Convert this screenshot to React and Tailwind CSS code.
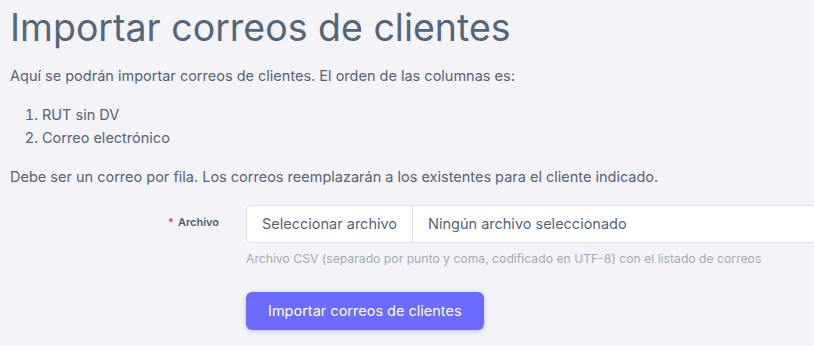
export default function App() {
  return (
    <div
      className="min-h-screen overflow-hidden bg-[#f3f3f8] px-[10px] text-[#556477]"
      style={{ fontFamily: "Inter, 'Noto Sans', sans-serif" }}
    >
      <h1 className="pt-[4px] text-[37.5px] leading-[48px] font-normal text-[#546679]">
        Importar correos de clientes
      </h1>

      <p className="mt-[12px] text-[14.5px] leading-[24px]">
        Aquí se podrán importar correos de clientes. El orden de las columnas es:
      </p>

      <ol className="mt-[15px] list-decimal pl-[32px] text-[14.5px] leading-[23px]">
        <li>RUT sin DV</li>
        <li>Correo electrónico</li>
      </ol>

      <p className="mt-[16px] text-[14.5px] leading-[24px]">
        Debe ser un correo por fila. Los correos reemplazarán a los existentes para el cliente indicado.
      </p>

      {/* file field */}
      <div className="mt-[16px] flex">
        <div className="flex w-[236px] shrink-0 justify-end pr-[27px] pt-[9px]">
          <label className="text-[11px] font-semibold text-[#4f5e70]">
            <span className="mr-[4px] text-[#ef4444]">*</span>
            Archivo
          </label>
        </div>
        <div className="flex-1">
          <div className="-mr-[40px] flex h-[38px] items-stretch rounded-[5px] border border-[#dcdfe5] bg-white text-[14.5px]">
            <div className="flex items-center border-r border-[#dcdfe5] px-[15px] text-[#556477]">
              Seleccionar archivo
            </div>
            <div className="flex items-center px-[15px] text-[#556477]">
              Ningún archivo seleccionado
            </div>
          </div>
          <p className="mt-[8px] text-[12.2px] leading-[16px] text-[#a3abb8]">
            Archivo CSV (separado por punto y coma, codificado en UTF-8) con el listado de correos
          </p>
          <button className="mt-[25px] h-[38px] rounded-[6px] bg-[#6b6bfe] px-[22px] text-[14.5px] text-white shadow-[0_1px_4px_rgba(99,102,241,0.35)]">
            Importar correos de clientes
          </button>
        </div>
      </div>
    </div>
  );
}
